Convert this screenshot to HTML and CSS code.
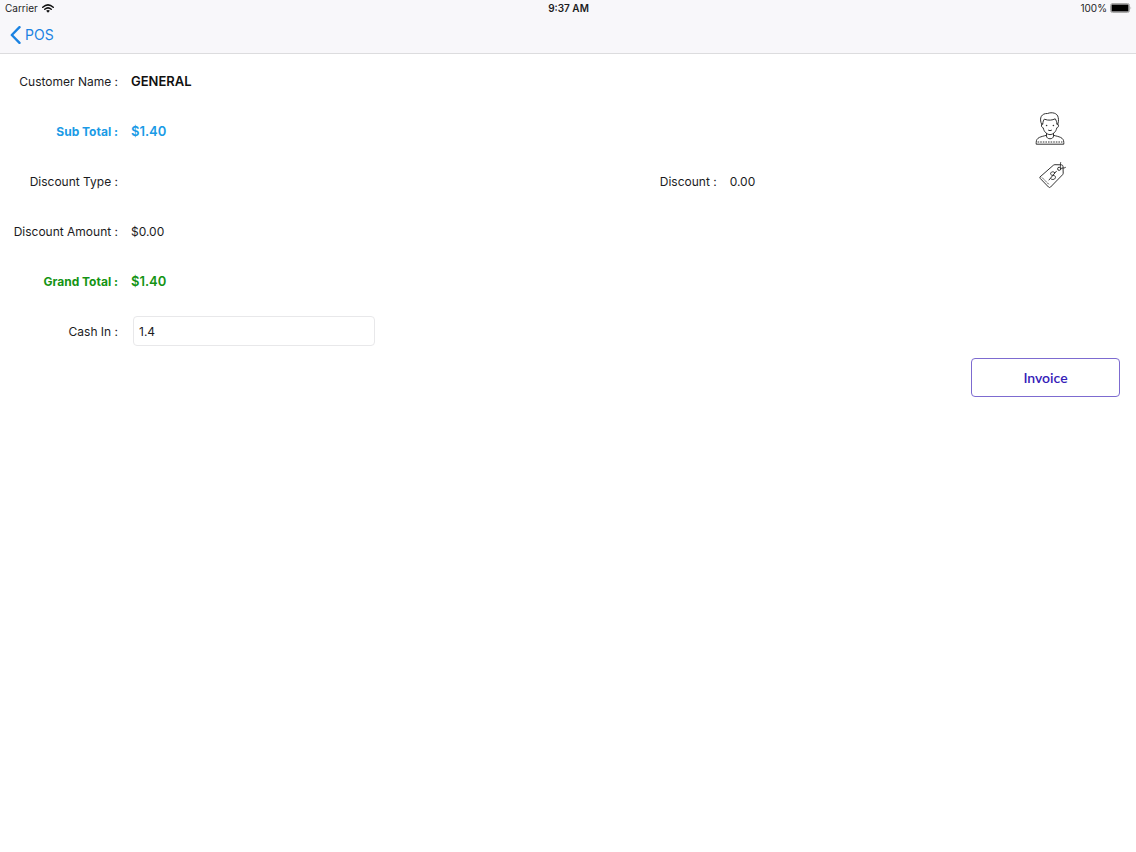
FILE: index.html
```html
<!DOCTYPE html>
<html lang="en">
<head>
  <meta charset="UTF-8">
  <meta name="viewport" content="width=device-width, initial-scale=1.0">
  <title>POS Payment</title>
  <link rel="stylesheet" href="styles.css">
</head>
<body>
  <header>
    <!-- Status Bar -->
    <div class="status-bar">
      <div class="status-left">
        <span>Carrier</span>
        <svg class="wifi" viewBox="0 0 24 18" aria-hidden="true">
          <path d="M1.5 6.5Q12 -3 22.5 6.5" />
          <path d="M5.5 10.5Q12 5 18.5 10.5" />
          <path class="dot" d="M8.3 13.4Q12 10.6 15.7 13.4L12 17.4Z" />
        </svg>
      </div>
      <div class="status-time">9:37 AM</div>
      <div class="status-right">
        <span>100%</span>
        <svg class="battery" viewBox="0 0 22 10" aria-hidden="true">
          <rect class="case" x="0.5" y="0.5" width="19" height="9" rx="2" />
          <rect x="1.5" y="1.5" width="17" height="7" rx="0.5" />
          <path class="tip" d="M20.5 3.5Q22 5 20.5 6.5Z" />
        </svg>
      </div>
    </div>

    <!-- Navigation Bar -->
    <nav>
      <a class="back" href="#">
        <svg viewBox="0 0 11 18" aria-hidden="true"><path d="M9.5 1.2L1.8 9L9.5 16.8" /></svg>
        <span>POS</span>
      </a>
    </nav>
  </header>

  <main>
    <form class="payment">
      <span class="label">Customer Name :</span>
      <output class="value customer">GENERAL</output>

      <span class="label sub-total">Sub Total :</span>
      <output class="value sub-total">$1.40</output>

      <span class="label">Discount Type :</span>
      <output class="value short"></output>
      <span class="label second">Discount :</span>
      <output class="value short">0.00</output>

      <span class="label">Discount Amount :</span>
      <output class="value">$0.00</output>

      <span class="label grand-total">Grand Total :</span>
      <output class="value grand-total">$1.40</output>

      <label class="label" for="cashIn">Cash In :</label>
      <div class="value">
        <input type="text" id="cashIn" class="cash-in" value="1.4" inputmode="decimal">
      </div>

      <!-- Customer and discount buttons -->
      <div class="actions">
        <button type="button" aria-label="Select customer">
          <svg class="person" viewBox="0 0 30 34">
            <path d="M6.7 12.5C3.5 5.5 7 1.2 12.5 1.5C17 -.2 22.5 1 23.2 5.5C23.9 8 23.3 10.5 22.7 12.5" />
            <path d="M7.7 12C8 9.5 8.5 8.3 9.3 7.2C13.5 8.8 17.5 8.2 20.2 6.8C21.2 8.3 21.8 10 22 12" />
            <path d="M7.7 11.8C6 11.5 5.8 15.5 8.2 15.8C9 20 12 22.6 15 22.6S21 20 21.8 15.8C24.2 15.5 24 11.5 22 11.8" />
            <path d="M11.5 21.3V24C11.5 27.7 18.5 27.7 18.5 24V21.3" />
            <path d="M11.5 23.3C6 24.8 1.2 25.2 1.2 30.5V32.2H28.8V30.5C28.8 25.2 24 24.8 18.5 23.3" />
            <path class="dashed" d="M3 30H27" />
            <circle class="eye" cx="11.6" cy="13.5" r="0.8" />
            <circle class="eye" cx="18.4" cy="13.5" r="0.8" />
            <path d="M13.5 18.3Q15 19.2 16.5 18.3" />
          </svg>
        </button>
        <button type="button" aria-label="Set discount">
          <svg class="tag" viewBox="0 0 27 27">
            <path d="M1.2 14.8L14.3 3.3Q15 2.7 16 2.7L22.4 2.8Q24 3 24 4.5L24.2 11.2Q24.2 12 23.6 12.7L11.5 25.1Q10.5 26 9.5 25L1.3 16.5Q.5 15.6 1.2 14.8Z" />
            <path class="dashed" d="M3.4 15.9L10.4 22.9" />
            <circle cx="20.2" cy="6.8" r="1.6" />
            <path d="M21.3 5.6C22 4 21 2.4 21.6 .6M21.8 6.6C23.2 5.4 24.6 6.7 26.4 5.5" />
            <path class="dollar" d="M15.7 10.6C13.8 8.6 11 10.3 11.7 12.3C12.6 14.2 15.8 12.6 16.4 14.7C17 17 13.5 18.8 11.7 16.6M17.4 9.2L10 18" />
          </svg>
        </button>
      </div>

      <div class="submit-row">
        <button type="button" class="invoice">Invoice</button>
      </div>
    </form>
  </main>
</body>
</html>
```
FILE: styles.css
```css
/* Global Styles */
* {
  box-sizing: border-box;
}

body {
  margin: 0;
  font-family: Inter, "Liberation Sans", sans-serif;
  font-size: 12px;
  color: #1c1c1e;
  background: #fff;
}

button {
  padding: 0;
  border: none;
  background: none;
  cursor: pointer;
}

svg {
  display: block;
  fill: none;
  stroke-linecap: round;
  stroke-linejoin: round;
}

header {
  background: #f8f7fa;
  border-bottom: 1px solid #dcdcde;
}

/* Status Bar */
.status-bar {
  display: grid;
  grid-template-columns: 1fr auto 1fr;
  align-items: center;
  height: 16px;
  padding: 0 4px 0 5px;
  font-size: 10px;
}

.status-left,
.status-right {
  display: flex;
  align-items: center;
  gap: 4px;
}

.status-right {
  justify-content: flex-end;
  gap: 3px;
}

.status-time {
  font-weight: 600;
}

.wifi {
  width: 12px;
  height: 9px;
  stroke: #111;
  stroke-width: 3;
}

.wifi .dot {
  fill: #111;
  stroke: none;
}

.battery {
  width: 22px;
  height: 10px;
  fill: #000;
}

.battery .case {
  fill: none;
  stroke: #aaa;
}

.battery .tip {
  fill: #aaa;
}

/* Navigation Bar */
nav {
  display: flex;
  align-items: center;
  height: 37px;
  padding: 0 10px;
}

.back {
  display: flex;
  align-items: center;
  gap: 4px;
  font-size: 14px;
  color: #1a82e2;
  text-decoration: none;
}

.back svg {
  width: 11px;
  height: 18px;
  stroke: #1a82e2;
  stroke-width: 2.4;
}

/* Payment Form */
.payment {
  display: grid;
  grid-template-columns: 118px 14fr 118px 9fr 101px;
  grid-auto-rows: 50px;
  column-gap: 13px;
  align-items: center;
  padding-top: 2px;
}

.label {
  grid-column-start: 1;
  text-align: right;
  white-space: nowrap;
}

.label.second {
  grid-column-start: 3;
}

.value {
  grid-column: 2 / 5;
}

.value.short {
  grid-column: auto;
}

.customer {
  font-size: 13px;
  font-weight: 600;
  color: #111;
}

.sub-total {
  font-weight: 700;
  color: #1a9be6;
}

.grand-total {
  font-weight: 700;
  color: #149414;
}

.value.sub-total,
.value.grand-total {
  font-size: 13px;
  font-weight: 600;
}

.cash-in {
  display: block;
  width: 242px;
  height: 30px;
  margin-left: 2px;
  padding: 0 5px;
  font: inherit;
  color: inherit;
  border: 1px solid #e8e8ea;
  border-radius: 4px;
  background: #fff;
}

/* Icon buttons */
.actions {
  grid-column: 5;
  grid-row: 2 / 4;
  align-self: start;
  display: flex;
  flex-direction: column;
  align-items: flex-start;
  gap: 16px;
  padding-top: 6px;
}

.actions svg {
  stroke: #333;
  stroke-width: 1;
}

.person {
  width: 30px;
  height: 34px;
}

.tag {
  width: 27px;
  height: 27px;
  margin-left: 4px;
}

.actions .dashed {
  stroke-dasharray: 0.8 1.8;
}

.actions .eye {
  fill: #333;
  stroke: none;
}

.submit-row {
  grid-column: 1 / -1;
  align-self: start;
  display: flex;
  justify-content: flex-end;
  padding: 2px 16px 0;
}

.invoice {
  width: 149px;
  height: 39px;
  font-family: Lato, sans-serif;
  font-size: 14px;
  font-weight: 600;
  color: #3520b8;
  border: 1px solid #7d6bd0;
  border-radius: 4px;
}
```
